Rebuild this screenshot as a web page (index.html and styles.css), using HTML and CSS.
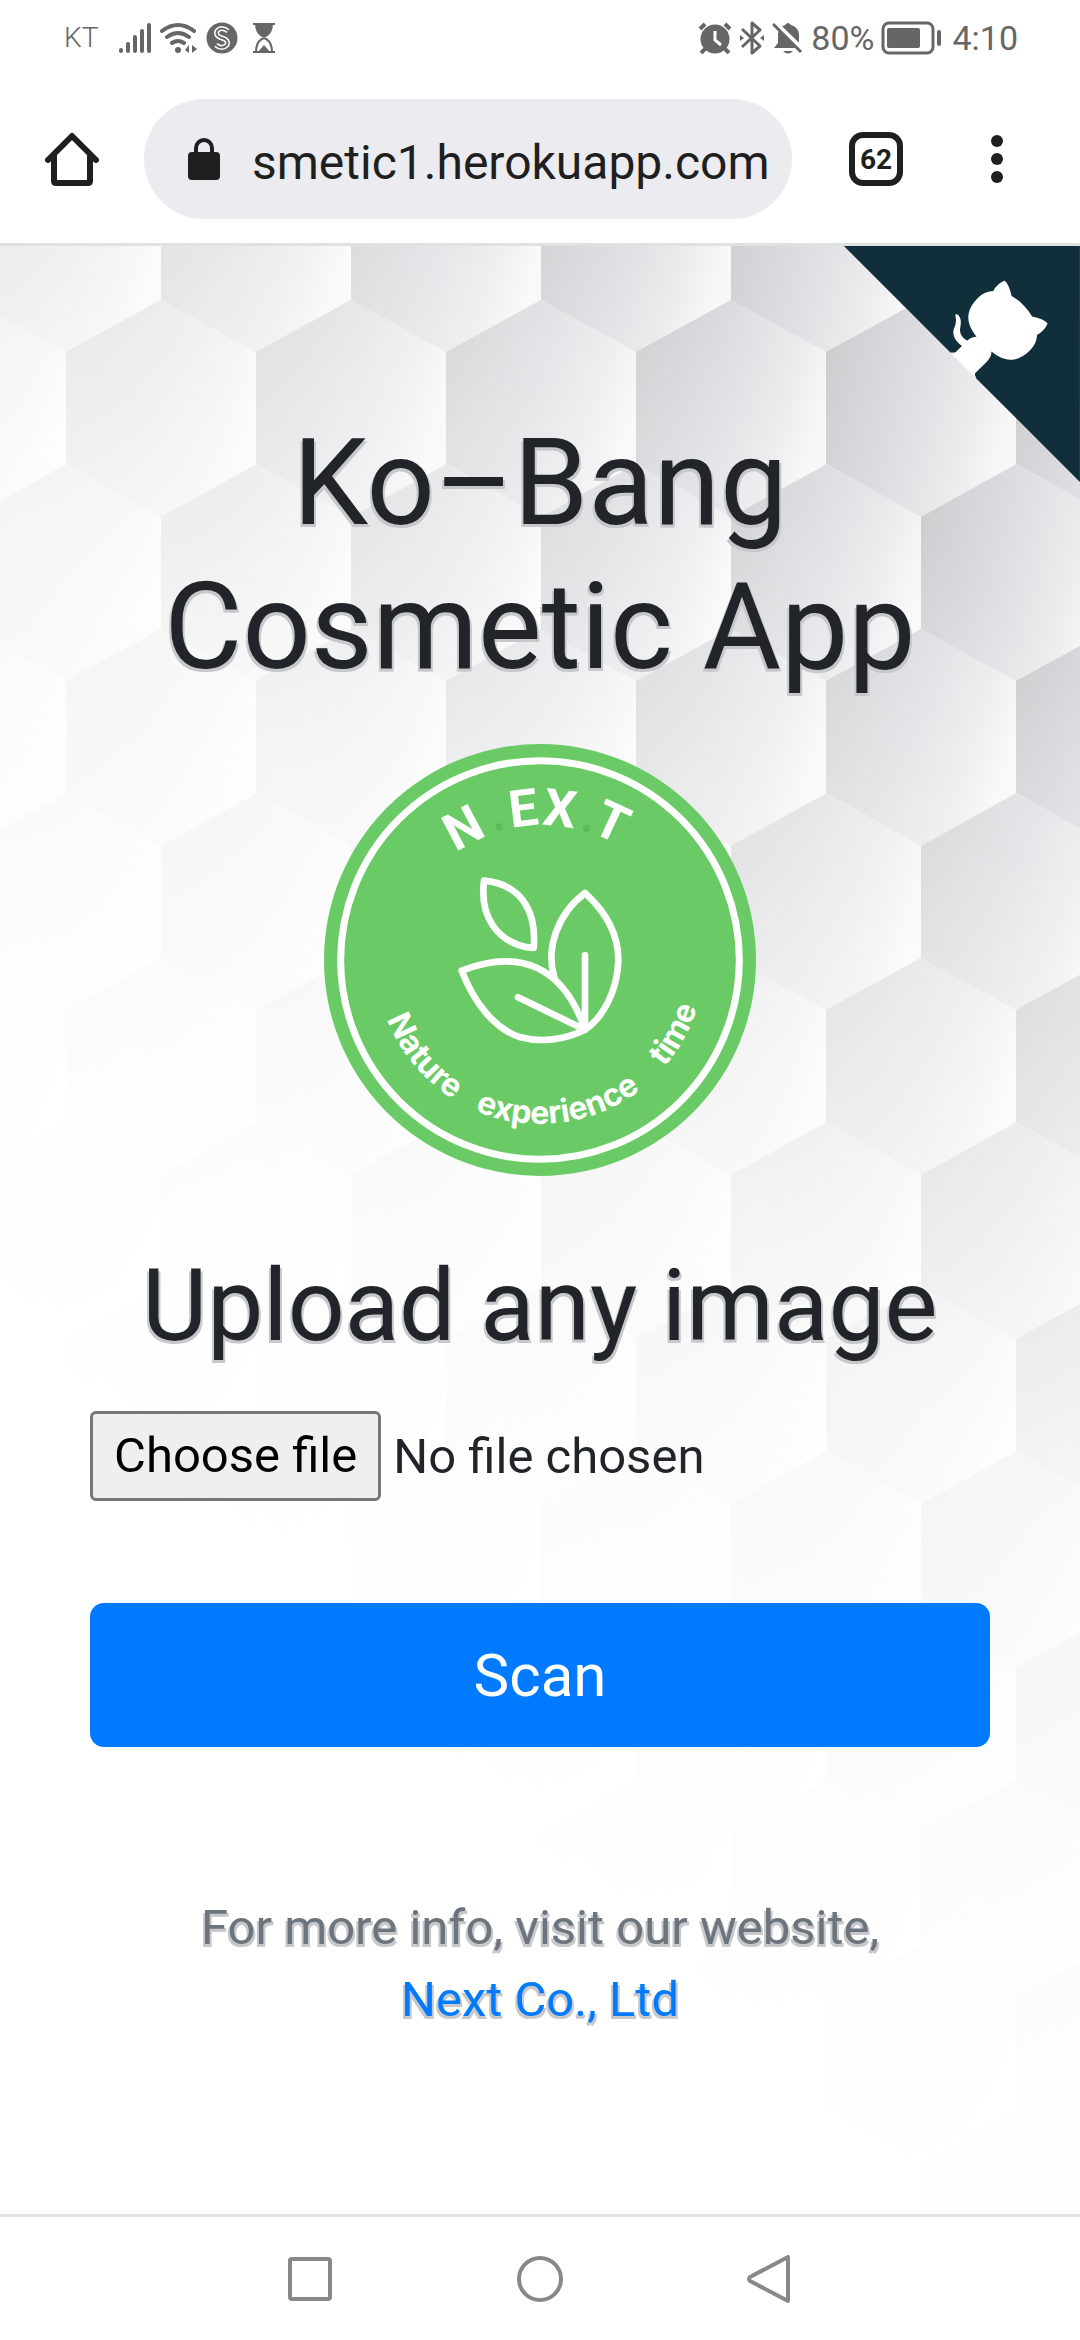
FILE: index.html
```html
<!DOCTYPE html>
<html lang="en">
<head>
<meta charset="utf-8">
<meta name="viewport" content="width=device-width, initial-scale=1">
<title>Ko–Bang Cosmetic App</title>
<link rel="stylesheet" href="styles.css">
</head>
<body>
<header class="chrome">
  <div class="status">
    <div class="status-left">
      <span class="carrier">KT</span>
      <svg class="signal" width="34" height="32" viewBox="0 0 34 32" stroke="#666" stroke-width="4" stroke-linecap="round"><path d="M3 28v1M10 22v7M17 15v14M24 9v20M31 3v26"/></svg>
      <svg class="wifi" width="38" height="32" viewBox="0 0 38 32" fill="none" stroke="#666" stroke-width="4" stroke-linecap="round"><path d="M2 9Q18-3 34 9M7 15Q18 7 29 15M12 21Q18 17 24 21"/><circle cx="18" cy="28" r="3" fill="#666" stroke="none"/><path d="M29 23v8l-4-3zM32 31v-8l5 4z" fill="#666" stroke="none"/></svg>
      <svg class="badge" width="32" height="32" viewBox="0 0 32 32" fill="none"><circle cx="16" cy="16" r="15.500" fill="#666"/><path d="M22 9Q15 4 11 9Q9 14 16 16Q23 18 21 23Q16 28 10 23" stroke="#fff" stroke-width="5"/><path d="M22 9Q15 4 11 9Q9 14 16 16Q23 18 21 23Q16 28 10 23" stroke="#666" stroke-width="2"/></svg>
      <svg width="24" height="32" viewBox="0 0 24 32" fill="none" stroke="#666" stroke-width="2"><path d="M1 2h22M1 30h22"/><path d="M3 2h18q0 9-7 13h-4Q3 11 3 2z" fill="#666" stroke="none"/><path d="M4 30q0-10 6-13l2-1 2 1q6 3 6 13"/><path d="M6 30l6-7 6 7z" fill="#666" stroke="none"/></svg>
    </div>
    <div class="status-right">
      <svg width="34" height="32" viewBox="0 0 34 32" fill="none" stroke="#666" stroke-width="4"><circle cx="17" cy="17" r="14.500" fill="#666" stroke="none"/><path d="M2 7l5-5M32 7l-5-5M7 27l-4 4M27 27l4 4"/><path d="M17 9v9l6 5" stroke="#fff" stroke-width="3"/></svg>
      <svg width="26" height="34" viewBox="0 0 26 34" fill="none" stroke="#666" stroke-width="3" stroke-linejoin="round"><path d="M3 8l18 17-8 7V2l8 7L3 26"/><path d="M1 14l4 3-4 3zM25 14l-4 3 4 3z" fill="#666" stroke="none"/></svg>
      <svg width="32" height="32" viewBox="0 0 32 32"><path d="M2 26l4-5v-9q1-7 7-9 3-4 6 0 7 2 8 9v9l4 5z" fill="#666"/><path d="M11 29h10q-5 5-10 0z" fill="#666"/><path d="M3 1l28 27" stroke="#fff" stroke-width="5"/><path d="M1 2l28 28" stroke="#666" stroke-width="3"/></svg>
      <span class="battery-level">80%</span>
      <svg class="battery" width="60" height="34" viewBox="0 0 60 34"><rect x="2" y="2" width="50" height="30" rx="6" fill="none" stroke="#666" stroke-width="3"/><rect x="6" y="7" width="33" height="20" rx="2" fill="#666"/><rect x="56" y="9" width="4" height="16" rx="2" fill="#666"/></svg>
      <time class="clock">4:10</time>
    </div>
  </div>
  <div class="toolbar">
    <button class="icon-button" aria-label="Home"><svg width="54" height="54" viewBox="0 0 54 54" fill="none" stroke="#1f1f1f" stroke-width="6" stroke-linejoin="round" stroke-linecap="round"><path d="M3 28L27 4l24 24M9 24v25q0 2 2 2h32q2 0 2-2V24"/></svg></button>
    <div class="address">
      <svg width="32" height="42" viewBox="0 0 32 42"><rect y="14" width="32" height="28" rx="4" fill="#1f1f1f"/><path d="M8 16V10a8 8 0 0 1 16 0v6" fill="none" stroke="#1f1f1f" stroke-width="4"/></svg>
      <input class="url" type="text" aria-label="Address" value="smetic1.herokuapp.com">
    </div>
    <button class="icon-button tabs" aria-label="Tabs">62</button>
    <button class="icon-button more" aria-label="More"><svg width="14" height="50" viewBox="0 0 14 50" fill="#1f1f1f"><circle cx="7" cy="7" r="6"/><circle cx="7" cy="25" r="6"/><circle cx="7" cy="43" r="6"/></svg></button>
  </div>
</header>

<main class="page">
  <svg class="backdrop" viewBox="0 0 1080 1968" preserveAspectRatio="xMidYMin slice" aria-hidden="true">
    <defs>
      <linearGradient id="face" gradientUnits="userSpaceOnUse" x1="0" y1="58" x2="188" y2="108">
        <stop offset="0" stop-color="#cdced0"/><stop offset=".5" stop-color="#e0e0e4"/><stop offset=".8" stop-color="#ececee"/><stop offset="1" stop-color="#f8f8f9"/>
      </linearGradient>
      <path id="hex" d="M95 0l95 52v112l-95 52L0 164V52z" fill="url(#face)"/>
      <pattern id="cells" patternUnits="userSpaceOnUse" x="-29" y="-110" width="190" height="329">
        <rect width="190" height="329" fill="#e6e6e9"/>
        <use href="#hex" x="0" y="0"/>
        <use href="#hex" x="-95" y="164"/><use href="#hex" x="95" y="164"/>
        <use href="#hex" x="-95" y="-165"/><use href="#hex" x="95" y="-165"/>
      </pattern>
      <linearGradient id="fade" gradientUnits="userSpaceOnUse" x1="1080" y1="0" x2="-20" y2="1100">
        <stop offset="0" stop-color="#fff"/><stop offset=".2" stop-color="#fff"/><stop offset=".32" stop-color="#c4c4c4"/><stop offset=".5" stop-color="#707070"/><stop offset=".6" stop-color="#3c3c3c"/><stop offset=".8" stop-color="#121212"/><stop offset="1" stop-color="#000"/>
      </linearGradient>
      <mask id="haze" maskUnits="userSpaceOnUse" x="0" y="0" width="1080" height="1968"><rect width="1080" height="1968" fill="url(#fade)"/></mask>
    </defs>
    <rect width="1080" height="1968" fill="url(#cells)" mask="url(#haze)"/>
  </svg>

  <a class="corner" href="#source" aria-label="View source on GitHub">
    <svg width="240" height="236" viewBox="0 4 250 246">
      <path fill="#112e3b" d="M0 0L115 115 130 115 142 142 250 250 250 0z"/>
      <path fill="#fff" d="M128.300 109C113.800 99.700 119 89.600 119 89.600 122 82.700 120.500 78.600 120.500 78.600 119.200 72 123.400 76.300 123.400 76.300 127.300 80.900 125.500 87.300 125.500 87.300 122.900 97.600 130.600 101.900 134.400 103.200"/>
      <path fill="#fff" d="M115 115C114.900 115.100 118.700 116.500 119.800 115.400L133.700 101.600C136.900 99.200 139.900 98.400 142.200 98.600 133.800 88 127.500 74.400 143.800 58 148.500 53.400 154 51.200 159.700 51 160.300 49.400 163.200 43.600 171.400 40.100 171.400 40.100 176.100 42.500 178.800 56.200 183.100 58.600 187.200 61.800 190.900 65.400 194.500 69 197.700 73.200 200.100 77.600 213.800 80.200 216.300 84.900 216.300 84.900 212.700 93.100 206.900 96 205.400 96.600 205.100 102.400 203 107.800 198.300 112.500 181.900 128.900 168.300 122.500 157.700 114.100 157.900 116.900 156.700 120.900 152.700 124.900L141 136.500C139.800 137.700 141.600 141.900 141.800 141.800z"/>
    </svg>
  </a>

  <div class="content">
    <h1 class="title">Ko–Bang Cosmetic App</h1>
    <svg class="logo" viewBox="0 0 1296 1296" role="img" aria-label="N.EX.T Nature experience time">
      <defs><path id="rim" d="M156 648A492 492 0 0 0 1140 648"/></defs>
      <circle cx="648" cy="648" r="648" fill="#6acb66"/>
      <circle cx="648" cy="648" r="598" fill="none" stroke="#fff" stroke-width="21"/>
      <g class="logo-name">
        <text transform="translate(443 298) rotate(-28)">N</text>
        <text transform="translate(604 246) rotate(-7)">E</text>
        <text transform="translate(701 247) rotate(7)">X</text>
        <text transform="translate(841 282) rotate(25)">T</text>
      </g>
      <g fill="#5cb95c"><circle cx="525" cy="249" r="11"/><circle cx="787" cy="253" r="11"/></g>
      <g fill="none" stroke="#fff" stroke-width="20" stroke-linecap="round" stroke-linejoin="round">
        <path d="M480 410Q566 418 604 480Q636 530 629 612Q550 606 506 544Q470 490 480 410z"/>
        <path d="M691 699C664 612 702 508 783 447C852 510 884 580 883 650C880 740 838 820 783 857"/>
        <path d="M783 857C750 760 700 700 640 672C570 640 490 650 413 680C450 776 512 856 590 880C650 896 720 888 783 857z"/>
        <path d="M783 634V857L582 760"/>
      </g>
      <g class="logo-motto">
        <text><textPath href="#rim" startOffset="22%">Nature</textPath></text>
        <text><textPath href="#rim" startOffset="54%">experience</textPath></text>
        <text><textPath href="#rim" startOffset="84%">time</textPath></text>
      </g>
    </svg>
    <form class="upload">
      <h2 class="subtitle">Upload any image</h2>
      <div class="picker">
        <label class="picker-button" for="image">Choose file</label>
        <span class="picker-name">No file chosen</span>
        <input class="picker-input" type="file" id="image" accept="image/*">
      </div>
      <button class="scan" type="submit">Scan</button>
    </form>
    <footer class="info">For more info, visit our website,<br><a href="#next">Next Co., Ltd</a></footer>
  </div>
</main>

<nav class="system-nav">
  <button class="icon-button" aria-label="Recent apps"><svg width="48" height="48" viewBox="0 0 48 48"><rect x="4" y="4" width="40" height="40" rx="2"/></svg></button>
  <button class="icon-button" aria-label="Home screen"><svg width="48" height="48" viewBox="0 0 48 48"><circle cx="24" cy="24" r="21"/></svg></button>
  <button class="icon-button" aria-label="Back"><svg width="48" height="48" viewBox="0 0 48 48"><path d="M42 2v44L4 26q-2-2 0-4z"/></svg></button>
</nav>
</body>
</html>
```
FILE: styles.css
```css
* { box-sizing: border-box; }

body {
  margin: 0;
  min-height: 100vh;
  display: flex;
  flex-direction: column;
  background: #fff;
  color: #212529;
  font-family: Roboto, "Liberation Sans", sans-serif;
}

button, input { font-family: inherit; }
svg { display: block; flex: none; }

.icon-button {
  display: flex;
  align-items: center;
  justify-content: center;
  padding: 0;
  border: 0;
  background: none;
}

/* Status bar and browser toolbar */
.chrome { border-bottom: 3px solid #dfe2e2; }

.status {
  display: flex;
  justify-content: space-between;
  align-items: center;
  height: 75px;
  padding: 0 62px 0 64px;
  color: #666;
}
.status-left, .status-right { display: flex; align-items: center; }
.status-left { gap: 8px; }
.status-right { gap: 7px; }
.carrier { font-size: 28px; font-weight: 300; margin-right: 12px; }
.badge { margin-right: 6px; }
.battery-level, .clock { font-size: 34px; }
.battery { margin-right: 4px; }

.toolbar {
  display: flex;
  align-items: center;
  height: 168px;
  padding: 0 76px 0 45px;
}
.address {
  flex: 1;
  display: flex;
  align-items: center;
  gap: 32px;
  min-width: 0;
  height: 120px;
  margin: 0 57px 0 45px;
  padding: 0 16px 0 44px;
  border-radius: 60px;
  background: #ebebf0;
}
.url {
  flex: 1;
  min-width: 0;
  padding: 6px 0 0;
  border: 0;
  background: none;
  color: #1f1f1f;
  font-size: 48px;
}
.tabs {
  width: 54px;
  height: 54px;
  border: 6px solid #1f1f1f;
  border-radius: 14px;
  color: #1f1f1f;
  font-size: 28px;
  font-weight: 700;
}
.more { margin-left: 87px; }

/* Page */
.page {
  position: relative;
  flex: 1;
  overflow: hidden;
}
.backdrop {
  position: absolute;
  inset: 0;
  width: 100%;
  height: 100%;
}
.corner {
  position: absolute;
  top: 0;
  right: 0;
}
.content {
  position: relative;
  display: flex;
  flex-direction: column;
  align-items: center;
  padding: 165px 90px 96px;
  pointer-events: none;
}
.content form, .content a { pointer-events: auto; }

.title, .subtitle, .info { text-shadow: -2px 3px 0 #c8c8cc, 2px 3px 0 #c8c8cc; }
.title, .subtitle { margin: 0; font-weight: 400; text-align: center; }
.title {
  max-width: 800px;
  font-size: 120px;
  line-height: 144px;
}
.logo { width: 48%; margin: 45px 0 72px; }
.logo-name { fill: #fff; font-size: 155px; font-weight: 700; text-anchor: middle; }
.logo-motto { fill: #fff; font-family: Inter, sans-serif; font-size: 96px; font-weight: 700; text-anchor: middle; }

.upload { width: 100%; }
.subtitle { font-size: 100px; line-height: 116px; }

.picker {
  position: relative;
  display: flex;
  align-items: center;
  gap: 12px;
  margin: 47px 0 102px;
  font-size: 49px;
}
.picker-button {
  padding: 0 21px;
  border: 3px solid #767676;
  border-radius: 6px;
  background: #efefef;
  color: #000;
  line-height: 84px;
}
.picker-input {
  position: absolute;
  inset: 0;
  width: 100%;
  opacity: 0;
}

.scan {
  display: block;
  width: 100%;
  height: 144px;
  border: 0;
  border-radius: 14px;
  background: #007bff;
  color: #fff;
  font-size: 60px;
}

.info {
  margin-top: 145px;
  color: #6c757d;
  font-size: 49px;
  line-height: 72px;
  text-align: center;
}
.info a { color: #007bff; text-decoration: none; }

/* System navigation */
.system-nav {
  display: flex;
  justify-content: center;
  align-items: center;
  gap: 182px;
  height: 126px;
  border-top: 3px solid #e2e2e2;
}
.system-nav svg { fill: none; stroke: #888; stroke-width: 4; stroke-linejoin: round; }
```
